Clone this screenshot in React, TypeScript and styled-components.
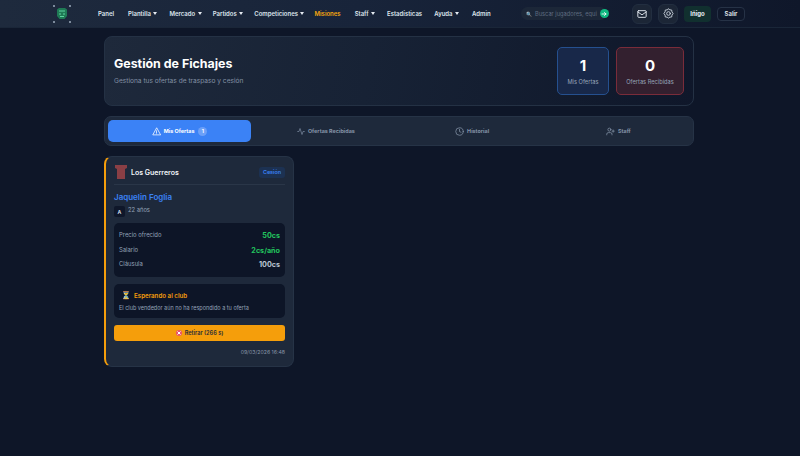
import React from "react";
import styled, { createGlobalStyle } from "styled-components";

const Global = createGlobalStyle`
  html, body { margin: 0; padding: 0; background: #0e1628; }
  body { font-family: Inter, "Noto Sans", sans-serif; color: #fff; width: 800px; height: 456px; overflow: hidden; }
  * { box-sizing: border-box; }
`;

const Page = styled.div`
  width: 800px; height: 456px; background: #0e1628;
  display: flex; flex-direction: column;
`;
const Nav = styled.nav`
  height: 28px; flex: none; display: flex; align-items: center; padding: 0 55px 0 53px;
  background: linear-gradient(90deg, #1e2a3d 0%, #18243a 45%, #0f172a 100%);
  border-bottom: 1px solid #1a2638;
`;
const Logo = styled.div`
  width: 18px; height: 18px; position: relative; display: flex; align-items: center; justify-content: center;
  margin-right: 27px; flex: none;
`;
const Corner = styled.span<{ $pos: string }>`
  position: absolute; width: 2px; height: 2px; background: #7c8a9c;
  ${p => p.$pos.includes("t") ? "top: 0;" : "bottom: 0;"}
  ${p => p.$pos.includes("l") ? "left: 0;" : "right: 0;"}
`;
const Links = styled.div`display: flex; align-items: center; width: 392px; flex: none;`;
const NavLink = styled.span<{ $gold?: boolean; $gap: number }>`
  font-size: 6px; font-weight: 600; white-space: nowrap; margin-right: ${p => p.$gap}px;
  color: ${p => p.$gold ? "#f5a70f" : "#dde4ec"}; display: inline-flex; align-items: center; gap: 2px;
`;
const Caret = styled.i`
  width: 0; height: 0; border-left: 2px solid transparent; border-right: 2px solid transparent;
  border-top: 3px solid #e5eaf1; margin-left: 0.500px;
`;
const Search = styled.div`
  width: 86px; height: 13px; margin-left: 31px; border-radius: 7px; background: #1c2738;
  display: flex; align-items: center; padding: 0 1.500px 0 5px; gap: 3px; flex: none;
`;
const SearchText = styled.span`
  font-size: 5.7px; color: #5f6c80; white-space: nowrap; flex: 1;
`;
const Go = styled.span`
  width: 9px; height: 9px; border-radius: 50%; background: #10b981; display: flex; align-items: center; justify-content: center; flex: none;
`;
const IconBtn = styled.div<{ $ml: number }>`
  width: 20px; height: 20px; border-radius: 6px; background: #1c2636; border: 1px solid #222e40;
  margin-left: ${p => p.$ml}px; display: flex; align-items: center; justify-content: center; flex: none;
`;
const UserBtn = styled.div`
  width: 27px; height: 16px; margin-left: 6px; border-radius: 4px; background: #11302f; font-size: 6px; font-weight: 700;
  color: #e8eef5; display: flex; align-items: center; justify-content: center; flex: none;
`;
const LogoutBtn = styled.div`
  width: 28px; height: 14px; margin-left: 6px; border-radius: 4px; background: #0f172a; border: 1px solid #263246; font-size: 6px; font-weight: 600;
  color: #e2e8f0; display: flex; align-items: center; justify-content: center; flex: none;
`;

const Main = styled.main`
  width: 590px; margin: 8px 0 0 104px; display: flex; flex-direction: column;
`;
const Hero = styled.section`
  height: 70px; border: 1px solid #243144; border-radius: 8px; padding: 0 9px;
  background: linear-gradient(100deg, #1e293b 0%, #172235 45%, #0f172a 100%);
  display: flex; align-items: center; justify-content: space-between;
`;
const HeroText = styled.div`display: flex; flex-direction: column; gap: 4px;`;
const Title = styled.h1`margin: 0; font-size: 12.4px; line-height: 16px; font-weight: 700; color: #fff;`;
const Sub = styled.p`margin: 0; font-size: 6.6px; line-height: 10px; color: #8391a5;`;
const Stats = styled.div`display: flex; gap: 7px;`;
const Stat = styled.div<{ $tone: "blue" | "red"; $w: number }>`
  width: ${p => p.$w}px; height: 48px; border-radius: 5px; border: 1px solid ${p => p.$tone === "blue" ? "#25508f" : "#7a2c3a"};
  background: ${p => p.$tone === "blue" ? "#182849" : "#33202f"};
  display: flex; flex-direction: column; align-items: center; justify-content: center; gap: 3px;
`;
const StatNum = styled.div`font-size: 15px; line-height: 18px; font-weight: 700; color: #fff;`;
const StatLabel = styled.div`font-size: 5.7px; line-height: 8px; color: #95a3b6; white-space: nowrap;`;

const Tabs = styled.div`
  height: 30px; margin-top: 10px; border: 1px solid #263346; border-radius: 7px; background: #1e293b; padding: 3px;
  display: grid; grid-template-columns: repeat(4, 1fr); gap: 3px;
`;
const Tab = styled.div<{ $active?: boolean }>`
  border-radius: 5px; background: ${p => p.$active ? "#3b82f6" : "transparent"}; color: ${p => p.$active ? "#fff" : "#8493a7"};
  font-size: 5.4px; font-weight: 700;
  display: flex; align-items: center; justify-content: center; gap: 3px; white-space: nowrap;
`;
const Badge = styled.span`
  width: 9px; height: 9px; margin-left: 1px; border-radius: 50%; background: #6ca0f8; color: #fff; font-size: 5px;
  display: flex; align-items: center; justify-content: center;
`;

const Card = styled.article`
  width: 190px; height: 211px; margin-top: 10px; border-radius: 8px; background: #1e293b; border: 1px solid #263346;
  border-left: 2px solid #f59e0b; padding: 7px 8px 0 8px; display: flex; flex-direction: column;
`;
const CardHead = styled.header`
  height: 21px; display: flex; align-items: center; padding-bottom: 4px; border-bottom: 1px solid #2a3648; flex: none;
`;
const Club = styled.span`font-size: 7px; font-weight: 600; color: #f1f5f9; margin-left: 4px; flex: 1;`;
const Tag = styled.span`
  width: 26px; height: 11px; border-radius: 3px; background: #1c3152; color: #3b82f6; font-size: 5.4px; font-weight: 600;
  display: flex; align-items: center; justify-content: center;
`;
const Player = styled.h2`margin: 7px 0 0; font-size: 8px; line-height: 11px; font-weight: 600; color: #3b82f6;`;
const Meta = styled.div`display: flex; align-items: flex-start; gap: 3px; margin-top: 3px;`;
const Pos = styled.span`
  width: 11px; height: 11px; border-radius: 2px; background: #0f172a; color: #cbd5e1; font-size: 5.2px; font-weight: 700;
  display: flex; align-items: center; justify-content: center;
`;
const Age = styled.span`font-size: 5.8px; line-height: 8px; color: #94a3b8;`;
const Prices = styled.div`
  margin-top: 6px; height: 54px; border-radius: 5px; background: #0d1527; padding: 5px 5px 0 5px;
  display: flex; flex-direction: column;
`;
const PriceRow = styled.div`height: 14.5px; display: flex; justify-content: space-between; align-items: flex-start;`;
const PriceLabel = styled.span`font-size: 5.9px; line-height: 13.500px; color: #94a3b8;`;
const PriceValue = styled.span<{ $green?: boolean }>`
  font-size: 7.2px; line-height: 15.500px; font-weight: 700; color: ${p => p.$green ? "#22c55e" : "#bcc7d4"};
`;
const Waiting = styled.div`
  margin-top: 7px; height: 34px; border-radius: 5px; background: #0d1527; padding: 6px 5px 0; display: flex; flex-direction: column; gap: 3px;
`;
const WaitTitle = styled.div`display: flex; align-items: center; gap: 3px; padding-left: 2px; font-size: 6.2px; line-height: 11px; font-weight: 600; color: #f59e0b;`;
const WaitText = styled.div`font-size: 5.5px; line-height: 8px; color: #94a3b8; white-space: nowrap;`;
const Retire = styled.div`
  margin-top: 7px; height: 16px; border-radius: 3px; background: #f59e0b; color: #1e293b; font-size: 5.6px; font-weight: 600;
  display: flex; align-items: center; justify-content: center; gap: 3px;
`;
const Stamp = styled.div`margin-top: 7px; text-align: right; font-size: 5.2px; line-height: 8px; color: #8a97a9;`;

const stroke = { fill: "none", strokeLinecap: "round" as const, strokeLinejoin: "round" as const };

const Mail = () => (
  <svg width="10" height="10" viewBox="0 0 24 24" {...stroke} stroke="#e8edf4" strokeWidth="2.2">
    <rect x="2" y="4" width="20" height="16" rx="2" /><path d="m2 7 10 7 10-7" />
  </svg>
);
const Gear = () => (
  <svg width="11" height="11" viewBox="0 0 24 24" {...stroke} stroke="#cbd3dd" strokeWidth="2">
    <path d="M12 2l3 2 4 .5.5 4L22 12l-2.500 3.500-.5 4-4 .5-3 2-3-2-4-.5-.5-4L2 12l2.500-3.500.5-4 4-.5z" /><circle cx="12" cy="12" r="4" />
  </svg>
);
const Triangle = () => (
  <svg width="9" height="9" viewBox="0 0 24 24" {...stroke} stroke="#fff" strokeWidth="2">
    <path d="M12 3 2 21h20z" /><path d="M12 10v5M12 18h.01" />
  </svg>
);
const Pulse = () => (
  <svg width="8" height="9" viewBox="0 0 24 24" {...stroke} stroke="#8493a7" strokeWidth="2">
    <path d="M22 12h-4l-3 9L9 3l-3 9H2" />
  </svg>
);
const Clock = () => (
  <svg width="9" height="9" viewBox="0 0 24 24" {...stroke} stroke="#8493a7" strokeWidth="2">
    <circle cx="12" cy="12" r="10" /><path d="M12 6v6l4 2" />
  </svg>
);
const UserPlus = () => (
  <svg width="9" height="9" viewBox="0 0 24 24" {...stroke} stroke="#8493a7" strokeWidth="2">
    <path d="M16 21v-2a4 4 0 0 0-4-4H6a4 4 0 0 0-4 4v2" /><circle cx="9" cy="7" r="4" /><path d="M19 8v6M22 11h-6" />
  </svg>
);
const Shirt = () => (
  <svg width="12" height="14" viewBox="0 0 12 14" style={{ flex: "none", marginLeft: 1 }}>
    <path d="M0 0h12v3l-2 1v10H2V4L0 3z" fill="#8a3f45" />
  </svg>
);
const Shield = () => (
  <svg width="10" height="12" viewBox="0 0 10 12">
    <path d="M0 1.500 2 0h6l2 1.500V8l-2.500 3h-5L0 8z" fill="#1f7a55" />
    <path d="M2 3h6M2 6h2M6 6h2M3 8.500h4" stroke="#5fd3a0" strokeWidth="1" />
  </svg>
);
const Cancel = () => (
  <svg width="6" height="6" viewBox="0 0 12 12">
    <circle cx="6" cy="6" r="6" fill="#e8566c" /><path d="M3 3l6 6M9 3l-6 6" stroke="#fff" strokeWidth="2" />
  </svg>
);

export default function App() {
  const links: [string, boolean, number][] = [
    ["Panel", false, 14], ["Plantilla", true, 12], ["Mercado", true, 11], ["Partidos", true, 11],
    ["Competiciones", true, 10], ["Misiones", false, 14], ["Staff", true, 12], ["Estadísticas", false, 12],
    ["Ayuda", true, 13], ["Admin", false, 0],
  ];
  return (
    <Page>
      <Global />
      <Nav>
        <Logo>
          <Corner $pos="tl" /><Corner $pos="tr" /><Corner $pos="bl" /><Corner $pos="br" />
          <Shield />
        </Logo>
        <Links>
          {links.map(([label, caret, gap]) => (
            <NavLink key={label} $gap={gap} $gold={label === "Misiones"}>
              {label}{caret && <Caret />}
            </NavLink>
          ))}
        </Links>
        <Search>
          <span style={{ fontSize: 5 }}>🔍</span>
          <SearchText>Buscar jugadores, equi</SearchText>
          <Go>
            <svg width="6" height="6" viewBox="0 0 24 24" {...stroke} stroke="#fff" strokeWidth="3.500"><path d="M4 12h16M14 6l6 6-6 6" /></svg>
          </Go>
        </Search>
        <IconBtn $ml={25}><Mail /></IconBtn>
        <IconBtn $ml={6}><Gear /></IconBtn>
        <UserBtn>Iñigo</UserBtn>
        <LogoutBtn>Salir</LogoutBtn>
      </Nav>
      <Main>
        <Hero>
          <HeroText>
            <Title>Gestión de Fichajes</Title>
            <Sub>Gestiona tus ofertas de traspaso y cesión</Sub>
          </HeroText>
          <Stats>
            <Stat $tone="blue" $w={52}><StatNum>1</StatNum><StatLabel>Mis Ofertas</StatLabel></Stat>
            <Stat $tone="red" $w={68}><StatNum>0</StatNum><StatLabel>Ofertas Recibidas</StatLabel></Stat>
          </Stats>
        </Hero>
        <Tabs>
          <Tab $active><Triangle />Mis Ofertas<Badge>1</Badge></Tab>
          <Tab><Pulse />Ofertas Recibidas</Tab>
          <Tab><Clock />Historial</Tab>
          <Tab><UserPlus />Staff</Tab>
        </Tabs>
        <Card>
          <CardHead>
            <Shirt />
            <Club>Los Guerreros</Club>
            <Tag>Cesión</Tag>
          </CardHead>
          <Player>Jaquelin Foglia</Player>
          <Meta><Pos>A</Pos><Age>22 años</Age></Meta>
          <Prices>
            <PriceRow><PriceLabel>Precio ofrecido</PriceLabel><PriceValue $green>50cs</PriceValue></PriceRow>
            <PriceRow><PriceLabel>Salario</PriceLabel><PriceValue $green>2cs/año</PriceValue></PriceRow>
            <PriceRow><PriceLabel>Cláusula</PriceLabel><PriceValue>100cs</PriceValue></PriceRow>
          </Prices>
          <Waiting>
            <WaitTitle><span style={{ fontSize: 8 }}>⏳</span>Esperando al club</WaitTitle>
            <WaitText>El club vendedor aún no ha respondido a tu oferta</WaitText>
          </Waiting>
          <Retire><Cancel />Retirar (266 s)</Retire>
          <Stamp>09/03/2026 16:48</Stamp>
        </Card>
      </Main>
    </Page>
  );
}
